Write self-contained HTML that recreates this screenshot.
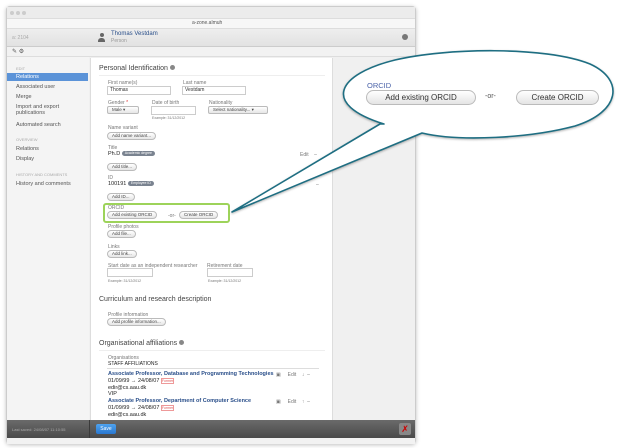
<!DOCTYPE html>
<html><head><meta charset="utf-8"><style>
*{margin:0;padding:0;box-sizing:border-box}
body{width:617px;height:448px;background:#fff;position:relative;overflow:hidden;font-family:"Liberation Sans",sans-serif;color:#333}
.a{position:absolute;white-space:nowrap}
.t{font-size:5px;color:#777}
.v{font-size:5.5px;color:#222}
.btn{position:absolute;height:8px;border:1px solid #bbb;border-radius:4px;background:linear-gradient(#fff,#e6e6e6);font-size:4.5px;line-height:6px;padding:0 4px;color:#444;white-space:nowrap}
.inp{position:absolute;height:9px;border:1px solid #ccc;background:#fff;font-size:5px;line-height:7px;padding-left:2px}
.h{font-size:7px;color:#444}
.lnk{font-size:5.5px;color:#2a4f8a;font-weight:bold}
.tag{display:inline-block;background:#7a8390;color:#fff;border-radius:3px;font-size:3.5px;padding:0 3px;line-height:5px;vertical-align:middle}
.nav{position:absolute;left:6px;width:82px;font-size:5.5px;color:#555;padding-left:10px}
</style></head><body>
<div class="a" style="left:6px;top:6px;width:410px;height:438px;border:1px solid #ccc;border-radius:4px;background:#f4f4f4;box-shadow:0 1px 4px rgba(0,0,0,.25)"></div>
<!-- title bar -->
<div class="a" style="left:7px;top:7px;width:408px;height:11px;background:#ececec"></div>
<div class="a" style="left:10px;top:11px;width:4px;height:4px;border-radius:2px;background:#ccc"></div>
<div class="a" style="left:16px;top:11px;width:4px;height:4px;border-radius:2px;background:#ccc"></div>
<div class="a" style="left:22px;top:11px;width:4px;height:4px;border-radius:2px;background:#ccc"></div>
<div class="a" style="left:7px;top:18px;width:408px;height:11px;background:#f7f7f7;border-top:1px solid #ddd;border-bottom:1px solid #ddd"></div>
<div class="a t" style="left:192px;top:20px;color:#555">a-zone.almuh</div>
<!-- header -->
<div class="a" style="left:7px;top:29px;width:408px;height:18px;background:linear-gradient(#eee,#e2e2e2);border-bottom:1px solid #ccc"></div>
<div class="a t" style="left:12px;top:35px;color:#aaa">a: 2104</div>
<div class="a" style="left:98px;top:33px;width:7px;height:9px"><div style="width:4px;height:4px;border-radius:2px;background:#666;margin-left:1.5px"></div><div style="width:7px;height:4px;border-radius:3px 3px 0 0;background:#666;margin-top:1px"></div></div>
<div class="a" style="left:111px;top:31px;font-size:6px;color:#2a4f8a">Thomas Vestdam</div>
<div class="a t" style="left:111px;top:38px;color:#999">Person</div>
<div class="a" style="left:402px;top:34px;width:6px;height:6px;border-radius:3px;background:#777"></div>
<!-- toolbar -->
<div class="a" style="left:7px;top:47px;width:408px;height:10px;background:#f2f2f2;border-bottom:1px solid #ddd"></div>
<div class="a" style="left:12px;top:48px;font-size:6px;color:#555">✎ ⚙</div>
<!-- sidebar -->
<div class="a" style="left:7px;top:57px;width:81px;height:363px;background:#f4f4f4"></div>
<div class="nav" style="top:66px;font-size:4px;color:#aaa">EDIT</div>
<div class="a" style="left:7px;top:73px;width:81px;height:8px;background:#5b93d8"></div>
<div class="nav" style="top:74px;color:#fff">Relations</div>
<div class="nav" style="top:84px">Associated user</div>
<div class="nav" style="top:94px">Merge</div>
<div class="nav" style="top:104px;line-height:6px">Import and export<br>publications</div>
<div class="nav" style="top:122px">Automated search</div>
<div class="nav" style="top:137px;font-size:4px;color:#aaa">OVERVIEW</div>
<div class="nav" style="top:146px">Relations</div>
<div class="nav" style="top:156px">Display</div>
<div class="nav" style="top:172px;font-size:4px;color:#aaa">HISTORY AND COMMENTS</div>
<div class="nav" style="top:181px">History and comments</div>
<!-- content -->
<div class="a" style="left:89px;top:57px;width:326px;height:363px;background:#f0f0f0"></div>
<div class="a" style="left:90px;top:58px;width:243px;height:362px;background:#fff;border-left:1px solid #ddd;border-right:1px solid #ddd"></div>
<div class="a h" style="left:99px;top:65px">Personal Identification <span style="display:inline-block;width:5px;height:5px;border-radius:3px;background:#888"></span></div>
<div class="a" style="left:99px;top:75px;width:226px;height:1px;background:#eee"></div>
<div class="a t" style="left:108px;top:80px">First name(s)</div>
<div class="inp" style="left:107px;top:86px;width:64px">Thomas</div>
<div class="a t" style="left:183px;top:80px">Last name</div>
<div class="inp" style="left:182px;top:86px;width:64px">Vestdam</div>
<div class="a t" style="left:108px;top:100px">Gender <span style="color:#d33">*</span></div>
<div class="btn" style="left:107px;top:106px;width:32px;border-radius:2px">Male ▾</div>
<div class="a t" style="left:152px;top:100px">Date of birth</div>
<div class="inp" style="left:151px;top:106px;width:45px"></div>
<div class="a t" style="left:152px;top:116px;font-size:3.5px">Example: 31/12/2012</div>
<div class="a t" style="left:209px;top:100px">Nationality</div>
<div class="btn" style="left:208px;top:106px;width:60px;border-radius:2px">Select nationality... ▾</div>
<div class="a t" style="left:108px;top:125px">Name variant</div>
<div class="btn" style="left:107px;top:132px">Add name variant...</div>
<div class="a t" style="left:108px;top:145px">Title</div>
<div class="a v" style="left:108px;top:151px">Ph.D <span class="tag">Academic degree</span></div>
<div class="a t" style="left:300px;top:152px">Edit &nbsp;&nbsp; –</div>
<div class="btn" style="left:107px;top:163px">Add title...</div>
<div class="a t" style="left:108px;top:175px">ID</div>
<div class="a v" style="left:108px;top:181px">100191 <span class="tag">Employee ID</span></div>
<div class="a t" style="left:316px;top:182px">–</div>
<div class="btn" style="left:107px;top:193px">Add ID...</div>
<div class="a" style="left:103px;top:203px;width:127px;height:20px;border:2px solid #9dd35a;border-radius:3px"></div>
<div class="a t" style="left:108px;top:205px">ORCID</div>
<div class="btn" style="left:107px;top:211px">Add existing ORCID</div>
<div class="a t" style="left:168px;top:213px">-or-</div>
<div class="btn" style="left:179px;top:211px">Create ORCID</div>
<div class="a t" style="left:108px;top:224px">Profile photos</div>
<div class="btn" style="left:107px;top:230px">Add file...</div>
<div class="a t" style="left:108px;top:244px">Links</div>
<div class="btn" style="left:107px;top:250px">Add link...</div>
<div class="a t" style="left:108px;top:263px">Start date as an independent researcher</div>
<div class="inp" style="left:107px;top:268px;width:46px"></div>
<div class="a t" style="left:108px;top:279px;font-size:3.5px">Example: 31/12/2012</div>
<div class="a t" style="left:207px;top:263px">Retirement date</div>
<div class="inp" style="left:207px;top:268px;width:46px"></div>
<div class="a t" style="left:208px;top:279px;font-size:3.5px">Example: 31/12/2012</div>
<div class="a h" style="left:99px;top:296px">Curriculum and research description</div>
<div class="a t" style="left:108px;top:312px">Profile information</div>
<div class="btn" style="left:107px;top:318px">Add profile information...</div>
<div class="a h" style="left:99px;top:340px">Organisational affiliations <span style="display:inline-block;width:5px;height:5px;border-radius:3px;background:#888"></span></div>
<div class="a" style="left:99px;top:350px;width:226px;height:1px;background:#eee"></div>
<div class="a t" style="left:108px;top:355px">Organisations</div>
<div class="a v" style="left:108px;top:361px;font-size:5px">STAFF AFFILIATIONS</div>
<div class="a" style="left:107px;top:368px;width:212px;height:1px;background:#ddd"></div>
<div class="a lnk" style="left:108px;top:371px">Associate Professor, Database and Programming Technologies</div>
<div class="a v" style="left:108px;top:378px">01/09/99 → 24/08/07 <span style="color:#d55;border:1px solid #e99;font-size:3.5px">Former</span></div>
<div class="a v" style="left:108px;top:385px">edir@cs.aau.dk</div>
<div class="a v" style="left:108px;top:391px">VIP</div>
<div class="a t" style="left:276px;top:372px">▣ &nbsp;&nbsp;&nbsp; Edit &nbsp;&nbsp; ↓ &nbsp;–</div>
<div class="a lnk" style="left:108px;top:398px">Associate Professor, Department of Computer Science</div>
<div class="a v" style="left:108px;top:405px">01/09/99 → 24/08/07 <span style="color:#d55;border:1px solid #e99;font-size:3.5px">Former</span></div>
<div class="a v" style="left:108px;top:412px">edir@cs.aau.dk</div>
<div class="a t" style="left:276px;top:399px">▣ &nbsp;&nbsp;&nbsp; Edit &nbsp;&nbsp; ↑ &nbsp;–</div>
<!-- bottom bar -->
<div class="a" style="left:7px;top:420px;width:408px;height:18px;background:linear-gradient(#6a6a6a,#4a4a4a)"></div>
<div class="a t" style="left:12px;top:427px;color:#aaa;font-size:4px">Last saved: 24/08/07 11:10:55</div>
<div class="a" style="left:89px;top:420px;width:1px;height:18px;background:#3a3a3a"></div>
<div class="a" style="left:96px;top:424px;width:20px;height:10px;background:linear-gradient(#4ea3ef,#2a78d0);border-radius:2px;color:#fff;font-size:5px;text-align:center;line-height:10px">Save</div>
<div class="a" style="left:399px;top:423px;width:12px;height:12px;background:#888;border-radius:2px;color:#c00;font-size:9px;text-align:center;line-height:12px">✗</div>
<div class="a" style="left:7px;top:438px;width:408px;height:6px;background:#f2f2f2"></div>
<!-- callout -->
<svg class="a" style="left:0;top:0" width="617" height="448">
<path d="M 384 124 C 320 104, 338 74, 395 60 C 445 48, 545 46, 590 64 C 625 80, 620 112, 575 126 C 530 138, 460 142, 422 133 L 232 212 L 380 124 Z" fill="#fff" stroke="#1e6e82" stroke-width="1.6" stroke-linejoin="round" style="filter:drop-shadow(0 1px 1px rgba(0,0,0,.3))"/>
</svg>
<div class="a" style="left:367px;top:81px;font-size:7.5px;color:#4a62a8">ORCID</div>
<div class="a" style="left:366px;top:90px;width:110px;height:15px;border:1px solid #bbb;border-radius:8px;background:linear-gradient(#fff,#e4e4e4);font-size:8px;line-height:13px;text-align:center;color:#333">Add existing ORCID</div>
<div class="a" style="left:485px;top:93px;font-size:7px;color:#555">-or-</div>
<div class="a" style="left:516px;top:90px;width:83px;height:15px;border:1px solid #bbb;border-radius:8px;background:linear-gradient(#fff,#e4e4e4);font-size:8px;line-height:13px;text-align:center;color:#333">Create ORCID</div>
</body></html>
